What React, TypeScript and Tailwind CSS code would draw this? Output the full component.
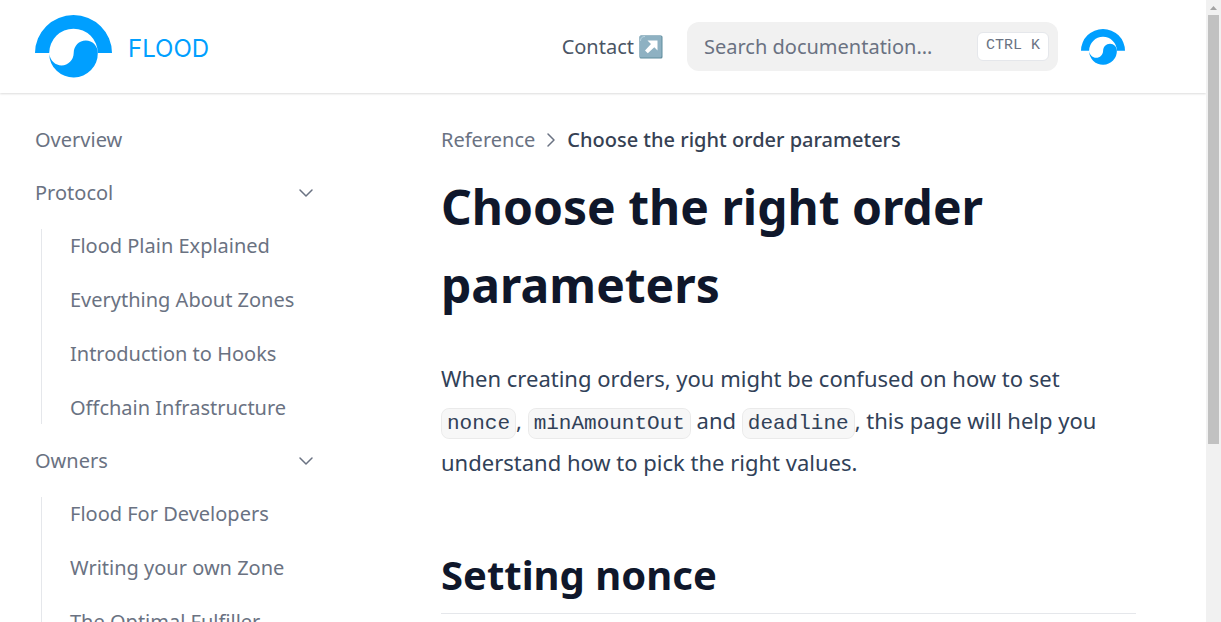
import { ChevronDown, ChevronRight } from "lucide-react";

function FloodMark({ className }: { className: string }) {
  return (
    <svg viewBox="0 0 77 63" className={className} fill="#009fff" aria-hidden="true">
      <path d="M0 38A38.5 38 0 0 1 77 38H62.8A24.3 24.3 0 0 0 14.2 38Z" />
      <path d="M14.2 39A24.3 24 0 0 0 62.8 38C62.8 31 57.5 25.6 50.8 25.6C44 25.6 38.8 31 38.7 38C38.6 45 33.2 50.4 26.5 50.4C20.5 50.4 15.5 46 14.2 39Z" />
    </svg>
  );
}

function ArrowBadge() {
  return (
    <svg viewBox="0 0 24 24" className="size-6" aria-hidden="true">
      <rect x="0.5" y="0.5" width="23" height="23" rx="1.5" fill="#5f8c9d" />
      <rect x="0.5" y="0.5" width="22" height="22" rx="1.5" fill="#8eb1c2" />
      <path d="M1.5 6Q1.5 1.5 6 1.5" fill="none" stroke="#b9d3df" strokeWidth="1" />
      <path d="M8.5 5.5H18.5V15.5L15.3 12.3L8.8 18.2L6 15.4L12 9Z" fill="#fff" />
    </svg>
  );
}

const sections = [
  {
    title: "Protocol",
    items: [
      "Flood Plain Explained",
      "Everything About Zones",
      "Introduction to Hooks",
      "Offchain Infrastructure",
    ],
  },
  {
    title: "Owners",
    items: ["Flood For Developers", "Writing your own Zone", "The Optimal Fulfiller"],
  },
];

function Sidebar() {
  return (
    <nav className="w-[348px] shrink-0 pt-[31px] pr-[30px] pl-[35px] text-xl leading-8 text-gray-500">
      <ul className="flex flex-col gap-[21px]">
        <li>
          <a href="#overview">Overview</a>
        </li>
        {sections.map((section) => (
          <li key={section.title}>
            <button type="button" className="flex w-full items-center justify-between text-left">
              {section.title}
              <ChevronDown className="size-6" strokeWidth={1.5} />
            </button>
            <ul className="mt-5 ml-[6px] flex flex-col gap-[22px] border-l border-gray-200 pt-px pl-7">
              {section.items.map((item) => (
                <li key={item}>
                  <a href="#page">{item}</a>
                </li>
              ))}
            </ul>
          </li>
        ))}
      </ul>
    </nav>
  );
}

function Code({ children }: { children: string }) {
  return (
    <code className="rounded-lg border border-black/5 bg-black/[0.03] px-[5px] py-[3px] font-['Liberation_Mono',monospace] text-[21px] leading-none">
      {children}
    </code>
  );
}

function Header() {
  return (
    <header className="flex h-[93px] shrink-0 items-center pr-[81px] pl-[35px] shadow-[0_1px_2px_rgba(0,0,0,0.14)]">
      <a href="#home" className="mr-auto flex items-center gap-4">
        <FloodMark className="h-[63px] w-[77px]" />
        <span className="pt-1 font-[Inter,sans-serif] text-2xl text-[#009fff]">FLOOD</span>
      </a>
      <a href="#contact" className="mr-6 flex items-center gap-[5px] text-xl text-gray-600">
        Contact
        <ArrowBadge />
      </a>
      <label className="mr-[23px] flex h-[49px] w-[371px] items-center rounded-xl bg-[#f1f1f1] pr-[9px] pl-[17px]">
        <input
          type="search"
          aria-label="Search documentation"
          placeholder="Search documentation…"
          className="min-w-0 flex-1 bg-transparent text-xl outline-none placeholder:text-gray-500"
        />
        <kbd className="flex h-[29px] items-center rounded-md border border-gray-200 bg-white px-2 font-['Liberation_Mono',monospace] text-[15px] text-gray-500">
          CTRL K
        </kbd>
      </label>
      <a href="#project" aria-label="Flood">
        <FloodMark className="h-9 w-11" />
      </a>
    </header>
  );
}

function ScrollRail() {
  return (
    <div className="flex w-[15px] shrink-0 flex-col items-center bg-[#f1f1f1]" aria-hidden="true">
      <svg viewBox="0 0 15 15" className="size-[15px] shrink-0">
        <path d="M4 10L7.5 6L11 10Z" fill="#a3a3a3" />
      </svg>
      <div className="h-[69%] w-[11px] bg-[#c1c1c1]" />
    </div>
  );
}

export default function App() {
  return (
    <div className="flex h-screen overflow-hidden bg-white font-['Noto_Sans',sans-serif]">
      <div className="flex min-w-0 flex-1 flex-col overflow-hidden">
        <Header />
        <div className="flex">
          <Sidebar />
          <main className="min-w-0 flex-1 pt-[31px] pr-[70px] pl-[93px] text-slate-700">
            <div className="flex items-center gap-1 text-xl leading-8 text-gray-500">
              <a href="#reference">Reference</a>
              <ChevronRight className="size-6" strokeWidth={1.5} />
              <span className="font-medium text-gray-700">Choose the right order parameters</span>
            </div>
            <h1 className="mt-3 text-[48px] leading-[78px] font-bold text-slate-900">
              Choose the right order parameters
            </h1>
            <p className="mt-[33px] text-[22px] leading-[42px]">
              When creating orders, you might be confused on how to set <Code>nonce</Code>,{" "}
              <Code>minAmountOut</Code> and <Code>deadline</Code>, this page will help you understand
              how to pick the right values.
            </p>
            <h2 className="mt-[58px] border-b border-gray-200 pb-1 text-[40px] leading-[68px] font-bold text-slate-900">
              Setting nonce
            </h2>
          </main>
        </div>
      </div>
      <ScrollRail />
    </div>
  );
}
